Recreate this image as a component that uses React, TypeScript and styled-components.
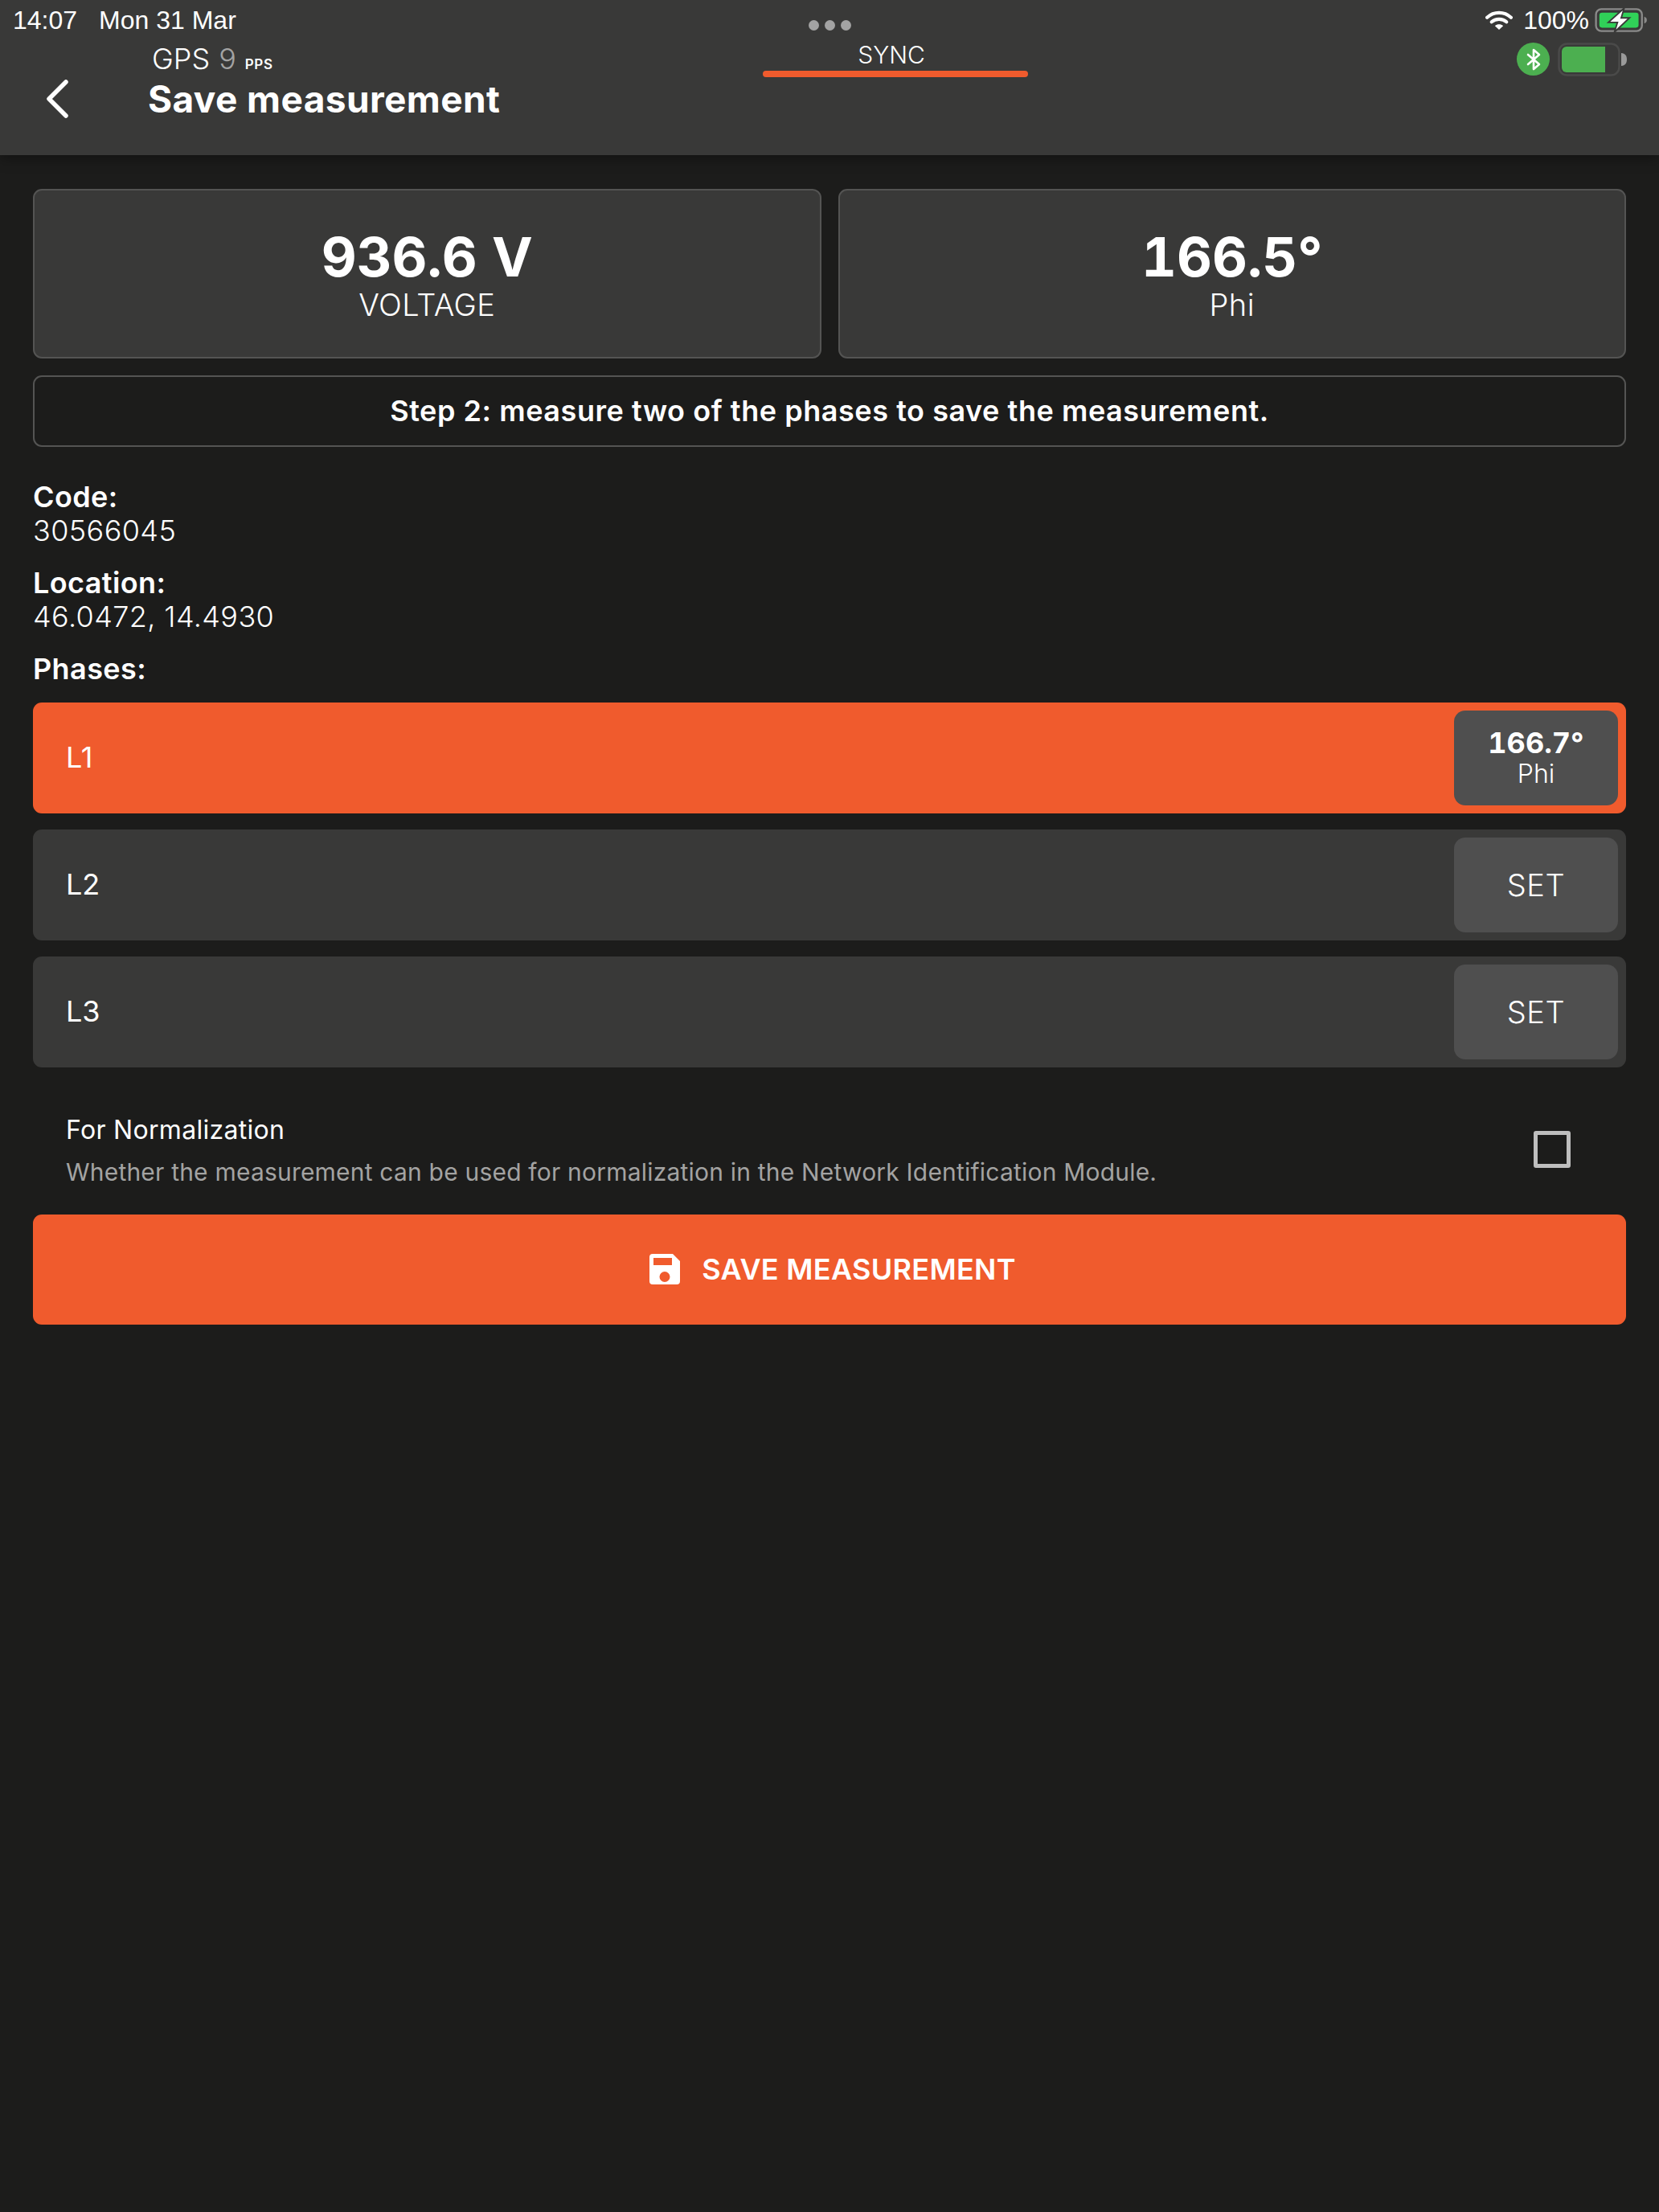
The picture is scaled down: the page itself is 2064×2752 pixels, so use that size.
import React from "react";
import styled, { createGlobalStyle } from "styled-components";

const Global = createGlobalStyle`
  html, body { margin: 0; padding: 0; background: #1c1c1b; }
  body { font-family: Inter, "Liberation Sans", sans-serif; color: #fff; }
  * { box-sizing: border-box; }
`;

const Page = styled.div`
  width: 2064px;
  height: 2752px;
  background: #1c1c1b;
  display: flex;
  flex-direction: column;
`;

const Header = styled.header`
  height: 193px;
  flex: none;
  background: #393938;
  box-shadow: 0 4px 16px rgba(0, 0, 0, 0.35);
  display: flex;
  flex-direction: column;
`;

const StatusBar = styled.div`
  height: 48px;
  padding: 2px 14px 0 16px;
  display: grid;
  grid-template-columns: 1fr auto 1fr;
  align-items: center;
  font-family: "Liberation Sans", Arial, sans-serif;
  font-size: 32px;
`;

const StatusLeft = styled.div`
  display: flex;
  gap: 27px;
`;

const Dots = styled.div`
  display: flex;
  gap: 7px;
  padding-top: 12px;
  margin-left: -2px;
`;

const Dot = styled.span`
  width: 13px;
  height: 13px;
  border-radius: 50%;
  background: #a3a3a3;
`;

const StatusRight = styled.div`
  display: flex;
  justify-content: flex-end;
  align-items: center;
  gap: 7px;
`;

const WifiSlot = styled.div`
  display: flex;
  margin-right: 6px;
`;

const Nav = styled.div`
  display: grid;
  grid-template-columns: 185px 764px 330px 1fr;
  height: 100px;
`;

const Back = styled.div`
  display: flex;
  align-items: center;
  padding: 48px 0 0 56px;
`;

const Titles = styled.div`
  display: flex;
  flex-direction: column;
  padding-top: 3px;
`;

const GpsRow = styled.div`
  display: flex;
  align-items: baseline;
  gap: 11px;
  font-size: 36px;
  font-weight: 300;
  padding-left: 4px;
  height: 46px;
  line-height: 44px;
`;

const GpsCount = styled.span`
  color: #a3a3a3;
`;

const GpsUnit = styled.span`
  font-size: 17px;
  font-weight: 600;
  letter-spacing: 0.6px;
`;

const Title = styled.div`
  font-size: 46px;
  font-weight: 700;
  line-height: 52px;
  letter-spacing: 0.4px;
  margin-left: -1px;
`;

const Tab = styled.div`
  display: flex;
  flex-direction: column;
  align-items: center;
  height: 48px;
`;

const TabLabel = styled.div`
  font-size: 30px;
  font-weight: 300;
  line-height: 40px;
  height: 40px;
  padding-right: 10px;
`;

const TabBar = styled.div`
  width: 100%;
  height: 8px;
  border-radius: 4px;
  background: #f05b2d;
`;

const DeviceIcons = styled.div`
  display: flex;
  justify-content: flex-end;
  align-items: flex-start;
  gap: 10px;
  padding: 5px 40px 0 0;
`;

const BtBadge = styled.div`
  width: 41px;
  height: 41px;
  border-radius: 50%;
  background: #4caf50;
  display: flex;
  align-items: center;
  justify-content: center;
`;

const Content = styled.main`
  padding: 42px 41px 0;
  display: flex;
  flex-direction: column;
`;

const Cards = styled.div`
  display: grid;
  grid-template-columns: 1fr 1fr;
  gap: 21px;
`;

const Card = styled.div`
  height: 211px;
  background: #393938;
  border: 2px solid #545453;
  border-radius: 11px;
  display: flex;
  flex-direction: column;
  align-items: center;
  justify-content: center;
`;

const CardValue = styled.div`
  font-size: 68px;
  font-weight: 700;
  line-height: 76px;
  font-feature-settings: "tnum";
`;

const CardLabel = styled.div`
  font-size: 38px;
  font-weight: 300;
  line-height: 44px;
  letter-spacing: 0.4px;
`;

const StepBox = styled.div`
  margin-top: 21px;
  height: 89px;
  padding-bottom: 2px;
  border: 2px solid #545453;
  border-radius: 11px;
  display: flex;
  align-items: center;
  justify-content: center;
  font-size: 36px;
  font-weight: 600;
  letter-spacing: 0.55px;
`;

const Info = styled.div`
  margin-top: 41px;
  display: flex;
  flex-direction: column;
  gap: 23px;
`;

const InfoBlock = styled.div`
  display: flex;
  flex-direction: column;
`;

const InfoLabel = styled.div`
  font-size: 36px;
  font-weight: 600;
  line-height: 42px;
  letter-spacing: 0.4px;
`;

const InfoValue = styled.div`
  font-size: 36px;
  font-weight: 300;
  line-height: 42px;
  letter-spacing: 0.4px;
`;

const Phases = styled.div`
  margin-top: 21px;
  display: flex;
  flex-direction: column;
  gap: 20px;
`;

const PhaseRow = styled.div<{ $active?: boolean }>`
  height: 138px;
  border-radius: 11px;
  background: ${(p) => (p.$active ? "#f05b2d" : "#393938")};
  padding: 10px 10px 10px 41px;
  display: flex;
  align-items: center;
  justify-content: space-between;
  font-size: 36px;
  font-weight: 300;
`;

const PhaseName = styled.span`
  font-weight: 400;
  margin-bottom: 2px;
`;

const PhaseButton = styled.div`
  width: 204px;
  height: 118px;
  border-radius: 14px;
  background: #4f4f4f;
  display: flex;
  flex-direction: column;
  align-items: center;
  justify-content: center;
`;

const SetLabel = styled.div`
  font-size: 38px;
  font-weight: 300;
  letter-spacing: 0.5px;
`;

const PhaseValue = styled.div`
  font-size: 36px;
  font-weight: 700;
  line-height: 40px;
  font-feature-settings: "tnum";
`;

const PhaseUnit = styled.div`
  font-size: 32px;
  font-weight: 300;
  line-height: 38px;
`;

const Normal = styled.div`
  margin-top: 56px;
  padding: 0 69px 0 41px;
  display: flex;
  align-items: center;
  justify-content: space-between;
`;

const NormalText = styled.div`
  display: flex;
  flex-direction: column;
  gap: 12px;
`;

const NormalTitle = styled.div`
  font-size: 32px;
  font-weight: 400;
  line-height: 44px;
  letter-spacing: 0.3px;
`;

const NormalHint = styled.div`
  font-size: 30px;
  font-weight: 400;
  color: #a3a3a2;
  line-height: 36px;
  letter-spacing: 0.2px;
`;

const CheckBox = styled.div`
  width: 46px;
  height: 46px;
  border: 5px solid #bebebe;
  border-radius: 3px;
`;

const SaveButton = styled.div`
  margin-top: 35px;
  height: 137px;
  padding: 0 0 2px 7px;
  border-radius: 11px;
  background: #f05b2d;
  display: flex;
  align-items: center;
  justify-content: center;
  gap: 26px;
  font-size: 36px;
  font-weight: 600;
  letter-spacing: 0.3px;
`;

const Wifi = () => (
  <svg width="34" height="26" viewBox="0 0 36 28" fill="none">
    <path d="M2 10.500C11 2 25 2 34 10.500" stroke="#fff" strokeWidth="4.500" strokeLinecap="round" />
    <path d="M8 16.500C13.500 11.500 22.500 11.500 28 16.500" stroke="#fff" strokeWidth="4.500" strokeLinecap="round" />
    <path d="M18 27L12.500 21.800C15.500 19 20.500 19 23.500 21.800Z" fill="#fff" />
  </svg>
);

const StatusBattery = () => (
  <svg width="66" height="30" viewBox="0 0 70 32" fill="none">
    <rect x="1.500" y="1.500" width="61" height="29" rx="7" stroke="#8a8a89" strokeWidth="2.500" />
    <rect x="6" y="6" width="52" height="20" rx="3.500" fill="#30d158" />
    <path d="M65.500 11.500c2.500.7 3.500 2.400 3.500 4.500s-1 3.800-3.500 4.500Z" fill="#8a8a89" />
    <path d="M39 0 18 19h12l-4 13 20-19H35Z" fill="#fff" stroke="#393938" strokeWidth="2" />
  </svg>
);

const DeviceBattery = () => (
  <svg width="86" height="42" viewBox="0 0 86 42" fill="none">
    <rect x="1.500" y="1.500" width="75" height="39" rx="10" stroke="#4a4a49" strokeWidth="2.500" />
    <path d="M11 5h48v32H11a6 6 0 0 1-6-6V11a6 6 0 0 1 6-6Z" fill="#4caf50" />
    <path d="M79 13c5 .5 7 3.500 7 8s-2 7.500-7 8Z" fill="#9a9a9a" />
  </svg>
);

const Bluetooth = () => (
  <svg width="18" height="28" viewBox="0 0 18 28" fill="none">
    <path d="M2 8l14 12-7 6V2l7 6L2 20" stroke="#fff" strokeWidth="2.600" strokeLinejoin="round" strokeLinecap="round" />
  </svg>
);

const Chevron = () => (
  <svg width="30" height="50" viewBox="0 0 30 50" fill="none">
    <path d="M26 4 5 25l21 21" stroke="#fff" strokeWidth="5.500" strokeLinecap="round" strokeLinejoin="round" />
  </svg>
);

const SaveIcon = () => (
  <svg width="40" height="40" viewBox="0 0 40 40">
    <path
      fillRule="evenodd"
      fill="#fff"
      d="M5 1h25l9 9v25a4 4 0 0 1-4 4H5a4 4 0 0 1-4-4V5a4 4 0 0 1 4-4Zm1 5v9h23V6Zm14 17a6.500 6.500 0 1 0 0 13 6.500 6.500 0 0 0 0-13Z"
    />
  </svg>
);

const phases = [
  { name: "L1", active: true },
  { name: "L2" },
  { name: "L3" },
];

export default function App() {
  return (
    <Page>
      <Global />
      <Header>
        <StatusBar>
          <StatusLeft>
            <span>14:07</span>
            <span>Mon 31 Mar</span>
          </StatusLeft>
          <Dots>
            <Dot />
            <Dot />
            <Dot />
          </Dots>
          <StatusRight>
            <WifiSlot>
              <Wifi />
            </WifiSlot>
            <span>100%</span>
            <StatusBattery />
          </StatusRight>
        </StatusBar>
        <Nav>
          <Back>
            <Chevron />
          </Back>
          <Titles>
            <GpsRow>
              <span>GPS</span>
              <GpsCount>9</GpsCount>
              <GpsUnit>PPS</GpsUnit>
            </GpsRow>
            <Title>Save measurement</Title>
          </Titles>
          <Tab>
            <TabLabel>SYNC</TabLabel>
            <TabBar />
          </Tab>
          <DeviceIcons>
            <BtBadge>
              <Bluetooth />
            </BtBadge>
            <DeviceBattery />
          </DeviceIcons>
        </Nav>
      </Header>
      <Content>
        <Cards>
          <Card>
            <CardValue>936.6 V</CardValue>
            <CardLabel>VOLTAGE</CardLabel>
          </Card>
          <Card>
            <CardValue>166.5°</CardValue>
            <CardLabel>Phi</CardLabel>
          </Card>
        </Cards>
        <StepBox>Step 2: measure two of the phases to save the measurement.</StepBox>
        <Info>
          <InfoBlock>
            <InfoLabel>Code:</InfoLabel>
            <InfoValue>30566045</InfoValue>
          </InfoBlock>
          <InfoBlock>
            <InfoLabel>Location:</InfoLabel>
            <InfoValue>46.0472, 14.4930</InfoValue>
          </InfoBlock>
          <InfoBlock>
            <InfoLabel>Phases:</InfoLabel>
          </InfoBlock>
        </Info>
        <Phases>
          {phases.map((p) => (
            <PhaseRow key={p.name} $active={p.active}>
              <PhaseName>{p.name}</PhaseName>
              <PhaseButton>
                {p.active ? (
                  <>
                    <PhaseValue>166.7°</PhaseValue>
                    <PhaseUnit>Phi</PhaseUnit>
                  </>
                ) : (
                  <SetLabel>SET</SetLabel>
                )}
              </PhaseButton>
            </PhaseRow>
          ))}
        </Phases>
        <Normal>
          <NormalText>
            <NormalTitle>For Normalization</NormalTitle>
            <NormalHint>
              Whether the measurement can be used for normalization in the Network Identification Module.
            </NormalHint>
          </NormalText>
          <CheckBox />
        </Normal>
        <SaveButton>
          <SaveIcon />
          <span>SAVE MEASUREMENT</span>
        </SaveButton>
      </Content>
    </Page>
  );
}
